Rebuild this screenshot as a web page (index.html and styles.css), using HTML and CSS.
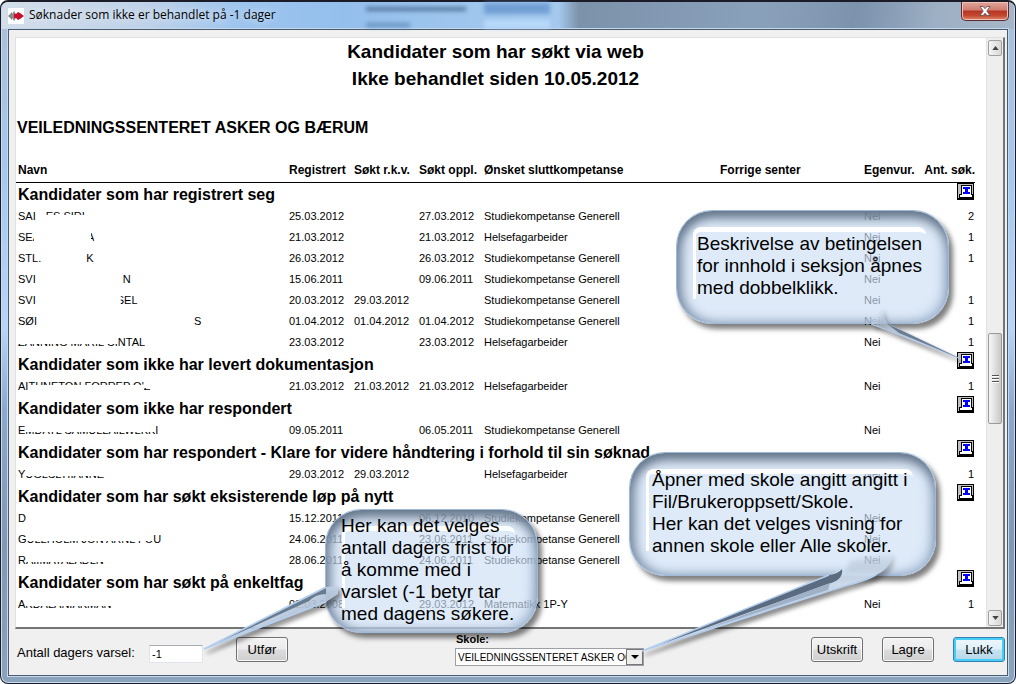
FILE: index.html
```html
<!DOCTYPE html>
<html lang="nb">
<head>
<meta charset="utf-8">
<title>Søknader som ikke er behandlet på -1 dager</title>
<link rel="stylesheet" href="styles.css">
</head>
<body>
<svg class="defs" aria-hidden="true">
  <symbol id="info" viewBox="0 0 17 17">
    <path d="M0 0h17v17H0z" fill="#000"/><path d="M1 1h15v14H1z" fill="#c0c0c0"/>
    <path d="M4 2h11v9h1v4H2v-4h2z" fill="#000"/><path d="M5 3h9v9h1v2H3v-2h2z" fill="#fff"/>
    <path d="M6 4h7v2h-2v3h2v2H6V9h2V6H6z" fill="#00f"/>
  </symbol>
  <linearGradient id="tail" x1="0" y1="0" x2="0.35" y2="1">
    <stop offset="0" stop-color="#d6e5f7" stop-opacity=".3"/><stop offset="0.6" stop-color="#b9cbe0"/><stop offset="1" stop-color="#d6e5f7"/>
  </linearGradient>
  <linearGradient id="wide-tail" x1="0" y1="0" x2="0" y2="1">
    <stop offset="0" stop-color="#d5e5f8" stop-opacity="0"/><stop offset="0.25" stop-color="#d5e5f8"/><stop offset="1" stop-color="#c3d4e9"/>
  </linearGradient>
</svg>
<div class="window">
  <header class="titlebar">
    <svg class="app-icon" viewBox="0 0 16 16" aria-hidden="true">
      <path d="M0 0h16v16H0z" fill="#fff"/>
      <path d="M0 8l4-4v2l2-3 2 3v4l-2 3-2-3v2z" fill="#8a8a8a"/>
      <path d="M6 6h2l2-2 2 1 4 3-4 3-2 1-2-2H6z" fill="#c8102e"/>
    </svg>
    <h1 class="caption">Søknader som ikke er behandlet på -1 dager</h1>
    <span class="behind" aria-hidden="true"></span>
    <button class="close" aria-label="Lukk vindu">
      <svg viewBox="0 0 12 10" aria-hidden="true"><path d="M1 .5h3l2 2.2L8 .5h3L7.8 5 11 9.500H8L6 7.300 4 9.500H1L4.200 5z" fill="#fff" stroke="#5b4650" stroke-width=".8"/></svg>
    </button>
  </header>
  <main class="client">
    <section class="viewer">
      <div class="report">
        <h2 class="report-title">Kandidater som har søkt via web<br>Ikke behandlet siden 10.05.2012</h2>
        <h3 class="school">VEILEDNINGSSENTERET ASKER OG BÆRUM</h3>
        <table class="list">
          <colgroup><col class="c-name"><col class="c-date"><col class="c-date"><col class="c-date"><col class="c-goal"><col><col class="c-own"><col class="c-count"></colgroup>
          <thead><tr><th>Navn</th><th>Registrert</th><th>Søkt r.k.v.</th><th>Søkt oppl.</th><th>Ønsket sluttkompetanse</th><th>Forrige senter</th><th>Egenvur.</th><th>Ant. søk.</th></tr></thead>
          <tbody>
            <tr class="group"><th colspan="7">Kandidater som har registrert seg</th><td><svg class="info"><use href="#info"/></svg></td></tr>
            <tr><td>SAI<i class="gap g12"></i><span class="upper">ES SIRI</span></td><td>25.03.2012</td><td></td><td>27.03.2012</td><td>Studiekompetanse Generell</td><td></td><td>Nei</td><td>2</td></tr>
            <tr><td><span class="left-part">SEA</span><i class="gap g51"></i><span class="right-part">A</span></td><td>21.03.2012</td><td></td><td>21.03.2012</td><td>Helsefagarbeider</td><td></td><td>Nei</td><td>1</td></tr>
            <tr><td>STL.<i class="gap g45"></i>K</td><td>26.03.2012</td><td></td><td>26.03.2012</td><td>Studiekompetanse Generell</td><td></td><td>Nei</td><td>1</td></tr>
            <tr><td>SVI<i class="gap g87"></i>N</td><td>15.06.2011</td><td></td><td>09.06.2011</td><td>Studiekompetanse Generell</td><td></td><td>Nei</td><td></td></tr>
            <tr><td>SVI<i class="gap g84"></i><span class="right-part">SEL</span></td><td>20.03.2012</td><td>29.03.2012</td><td></td><td>Studiekompetanse Generell</td><td></td><td>Nei</td><td>1</td></tr>
            <tr><td>SØI<i class="gap g156"></i>S</td><td>01.04.2012</td><td>01.04.2012</td><td>01.04.2012</td><td>Studiekompetanse Generell</td><td></td><td>Nei</td><td>1</td></tr>
            <tr><td><span class="lower">ZANNING MARIL CI</span>NTAL</td><td>23.03.2012</td><td></td><td>23.03.2012</td><td>Helsefagarbeider</td><td></td><td>Nei</td><td>1</td></tr>
            <tr class="group"><th colspan="7">Kandidater som ikke har levert dokumentasjon</th><td><svg class="info"><use href="#info"/></svg></td></tr>
            <tr><td>AI<span class="upper">THNETON FORREP O</span>'<span class="lower">Z</span></td><td>21.03.2012</td><td>21.03.2012</td><td>21.03.2012</td><td>Helsefagarbeider</td><td></td><td>Nei</td><td>1</td></tr>
            <tr class="group"><th colspan="7">Kandidater som ikke har respondert</th><td><svg class="info"><use href="#info"/></svg></td></tr>
            <tr><td>E<span class="lower">MDATL SAMULLAILWLKK</span>I</td><td>09.05.2011</td><td></td><td>06.05.2011</td><td>Studiekompetanse Generell</td><td></td><td>Nei</td><td></td></tr>
            <tr class="group"><th colspan="7">Kandidater som har respondert - Klare for videre håndtering i forhold til sin søknad</th><td><svg class="info"><use href="#info"/></svg></td></tr>
            <tr><td>Y<span class="lower">UGLSLTIIANNE</span></td><td>29.03.2012</td><td>29.03.2012</td><td></td><td>Helsefagarbeider</td><td></td><td>Nei</td><td>1</td></tr>
            <tr class="group"><th colspan="7">Kandidater som har søkt eksisterende løp på nytt</th><td><svg class="info"><use href="#info"/></svg></td></tr>
            <tr><td>D</td><td>15.12.2011</td><td></td><td>06.12.2010</td><td>Studiekompetanse Generell</td><td></td><td>Nei</td><td></td></tr>
            <tr><td>G<span class="lower">ULLHOLM JON ARNL FO</span>U</td><td>24.06.2011</td><td></td><td>23.06.2011</td><td>Studiekompetanse Generell</td><td></td><td>Nei</td><td></td></tr>
            <tr><td>R<span class="lower">AIIMATALADLN</span></td><td>28.06.2011</td><td></td><td>24.06.2011</td><td>Studiekompetanse Generell</td><td></td><td>Nei</td><td></td></tr>
            <tr class="group"><th colspan="7">Kandidater som har søkt på enkeltfag</th><td><svg class="info"><use href="#info"/></svg></td></tr>
            <tr><td>A<span class="lower">KDALANIAKMAN</span></td><td>02.03.2008</td><td></td><td>29.03.2012</td><td>Matematikk 1P-Y</td><td></td><td>Nei</td><td>1</td></tr>
          </tbody>
        </table>
      </div>
      <div class="scrollbar">
        <button class="step" aria-label="Rull opp"><svg viewBox="0 0 8 5"><path d="M0 5l4-5 4 5z" fill="#444"/></svg></button>
        <span class="track-above"></span>
        <span class="thumb"><i></i><i></i><i></i></span>
        <span class="track-below"></span>
        <button class="step" aria-label="Rull ned"><svg viewBox="0 0 8 5"><path d="M0 0l4 5 4-5z" fill="#444"/></svg></button>
      </div>
    </section>
    <footer class="actions">
      <label class="days-label" for="days">Antall dagers varsel:</label>
      <input class="days" id="days" type="text" value="-1">
      <button class="btn">Utfør</button>
      <div class="school-pick">
        <label for="skole">Skole:</label>
        <div class="combo">
          <select id="skole"><option>VEILEDNINGSSENTERET ASKER OG BÆRUM</option></select>
          <span class="drop" aria-hidden="true"><svg viewBox="0 0 8 4"><path d="M0 0h8L4 4z"/></svg></span>
        </div>
      </div>
      <div class="right">
        <button class="btn">Utskrift</button>
        <button class="btn">Lagre</button>
        <button class="btn default">Lukk</button>
      </div>
    </footer>
  </main>

  <aside class="callout describe">
    <p>Beskrivelse av betingelsen<br>for innhold i seksjon åpnes<br>med dobbelklikk.</p>
    <svg class="tail" viewBox="0 0 284 148" aria-hidden="true">
      <path d="M194 113C199 104 204 103 205 92Q206 110 213 114L284 148Z" fill="url(#tail)" fill-opacity=".85"/>
      <path d="M194 113L284 148L213 114" fill="none" stroke="#b4cbe8"/>
      <path d="M209 112L213 114L284 148L222 122Z" fill="#56687d" fill-opacity=".8"/>
    </svg>
  </aside>
  <aside class="callout open-school">
    <p>Åpner med skole angitt angitt i<br>Fil/Brukeroppsett/Skole.<br>Her kan det velges visning for<br>annen skole eller Alle skoler.</p>
    <svg class="tail" viewBox="0 0 306 200" aria-hidden="true">
      <path d="M199 122Q213 119 217 104L262 96Q264 114 246 122Q235 127 218 132L12 198Z" fill="url(#wide-tail)" fill-opacity=".88"/>
      <path d="M199 122Q208 121 212 116Q214 127 198 131L12 198Z" fill="#5b6c81"/>
      <path d="M200 130L70 178L198 137Z" fill="#9fb1c7"/>
      <path d="M199 122L12 198L218 132Q235 128 246 122" fill="none" stroke="#b4cfee" stroke-width="1.500"/>
    </svg>
  </aside>
  <aside class="callout deadline">
    <p>Her kan det velges<br>antall dagers frist for<br>å komme med i<br>varslet (-1 betyr tar<br>med dagens søkere.</p>
    <svg class="tail" viewBox="0 0 136 142" aria-hidden="true">
      <path d="M124 77L2 139L124 92L136 84V76Z" fill="#bfd0e5" fill-opacity=".88"/>
      <path d="M124 78L2 139L107 91Q114 84 124 84Z" fill="#53657a" fill-opacity=".8"/>
      <path d="M124 77L2 139L124 92" fill="none" stroke="#b4cfee" stroke-width="1.500"/>
    </svg>
  </aside>
</div>
</body>
</html>
```

FILE: styles.css
```css
* { box-sizing: border-box; }
body { margin: 0; background: #fff; color: #000; font-family: "Liberation Sans", Arial, sans-serif; font-size: 11px; }
h1, h2, h3, p { margin: 0; }
button, input, select { font-family: inherit; color: inherit; margin: 0; }
.defs { position: absolute; width: 0; height: 0; }

.window {
  position: relative;
  display: flex;
  flex-direction: column;
  min-height: 100vh;
  padding: 0 7px 7px;
  border: 1px solid #1b1c28;
  border-top-width: 2px;
  border-radius: 8px;
  background: linear-gradient(#a9bfd8, #a5c8ef 25%, #b4d6f8 48%, #8ba9cd 60%, #8098b4 80%, #8ca3bd);
  box-shadow: inset 0 0 0 1px #c9dcf0;
}
.titlebar {
  display: flex;
  align-items: center;
  gap: 5px;
  height: 27px;
  margin: 0 -6px;
  padding-left: 6px;
  border-radius: 6px 6px 0 0;
  background:
    linear-gradient(100deg, transparent 74%, #7c92ad 84%, transparent 92%),
    linear-gradient(90deg, #d3deea 0, #bfd2e8 14%, #9cc4ee 24%, #94bfec 34%, #a4c9ee 52%, #a4c9ee 55%, #7c92ab 57%, #8ba2bc 76%, #a6b6c8 100%);
}
.app-icon { width: 16px; height: 16px; }
.caption { font: 400 12px/18px "Open Sans", "Noto Sans", sans-serif; padding-bottom: 2px; text-shadow: 0 0 8px #fff; }
.behind {
  width: 200px;
  height: 26px;
  margin-left: 85px;
  background:
    linear-gradient(#53779f, #53779f) 0 4px / 100px 4px no-repeat,
    linear-gradient(#6790be, #6790be) 0 20px / 44px 4px no-repeat,
    linear-gradient(#719fd4, #719fd4) 118px 0 / 66px 11px no-repeat,
    linear-gradient(#b8d9fa, #b8d9fa) 118px 17px / 66px 8px no-repeat;
  filter: blur(2px);
}
.close {
  display: grid;
  place-items: center;
  align-self: flex-start;
  width: 48px;
  height: 19px;
  margin-left: auto;
  margin-right: 5px;
  padding: 0;
  border: 1px solid #5d2a2f;
  border-top: 0;
  border-radius: 0 0 5px 5px;
  background: linear-gradient(#e2a69c, #cf7d70 45%, #b73522 50%, #c3482f 75%, #dd8a6c);
  box-shadow: inset 0 0 0 1px #efc0b8;
}
.close svg { width: 12px; height: 10px; }

.client { display: flex; flex: 1; flex-direction: column; padding: 7px 2px 0 6px; border: 1px solid #4a5b6e; background: #f0f0f0; box-shadow: 0 0 0 1px #c4d8ee; }
.viewer { display: flex; flex: 1; border: 1px solid #e0e0e0; border-right: 2px solid #747474; border-bottom: 2px solid #747474; background: #fff; }
.report { flex: 1; min-width: 0; padding-right: 11px; }
.report-title { font-size: 19px; line-height: 27px; text-align: center; }
.school { margin: 22px 0 0 1px; font-size: 16px; line-height: 27px; }

.list { width: 100%; margin-top: 18px; border-collapse: collapse; table-layout: fixed; }
.c-name { width: 273px; }
.c-date { width: 65px; }
.c-goal { width: 236px; }
.c-own { width: 60px; }
.c-count { width: 51px; }
.list th, .list td { padding: 0; text-align: left; white-space: nowrap; vertical-align: middle; }
.list th:first-child, .list td:first-child { padding-left: 2px; }
.list thead th { height: 23px; font-size: 12px; border-bottom: 1px solid #000; }
.list td { height: 21px; padding-top: 2px; line-height: 13px; }
.list td:last-child, .list th:last-child { text-align: right; }
.list tbody td:last-child { padding-right: 1px; }
.list .group th { height: 23px; padding-top: 2px; font-size: 16px; line-height: 18px; text-align: left; }
.list .group td { height: 23px; padding: 0; vertical-align: top; }
.info { display: block; width: 17px; height: 17px; margin-left: auto; }
.gap { display: inline-block; }
.g12 { width: 10px; }
.g45 { width: 45px; }
.g51 { width: 47px; }
.g84 { width: 81px; }
.g87 { width: 87px; }
.g156 { width: 157px; }
.upper, .lower, .left-part, .right-part { display: inline-block; }
.upper { clip-path: inset(0 0 8px 0); }
.lower { clip-path: inset(8px 0 0 0); }
.left-part { clip-path: inset(0 6px 0 0); }
.right-part { clip-path: inset(0 0 0 4px); }

.scrollbar { display: flex; flex-direction: column; width: 17px; padding: 2px 1px 1px; background: #eee; border-left: 1px solid #e2e2e2; }
.step { display: grid; place-items: center; height: 16px; padding: 0; border: 1px solid #a0a0a0; border-radius: 2px; background: linear-gradient(90deg, #f4f4f4, #d8d8d8); }
.step svg { width: 7px; height: 4px; }
.track-above { flex: 279; }
.track-below { flex: 187; }
.thumb { display: flex; flex-direction: column; justify-content: center; align-items: center; gap: 1px; height: 91px; border: 1px solid #9a9a9a; border-radius: 2px; background: linear-gradient(90deg, #f6f6f6, #e2e2e2 45%, #c8c8c8); }
.thumb i { width: 7px; height: 2px; border-top: 1px solid #555; background: #fff; }

.actions { display: flex; align-items: flex-start; height: 46px; padding: 8px 0 0 2px; }
.days-label { width: 132px; padding-top: 8px; font-size: 13px; line-height: 16px; white-space: nowrap; }
.days { width: 54px; height: 18px; margin: 8px 33px 0 0; padding: 0 2px; border: 1px solid #e0e4ea; border-top-color: #a8adb5; background: #fff; font-size: 11px; }
.btn { width: 52px; height: 25px; padding: 0; border: 1px solid #707070; border-radius: 3px; background: linear-gradient(#f3f3f3, #ebebeb 48%, #dcdcdc 52%, #cfcfcf); box-shadow: inset 0 0 0 1px #fafafa; font-size: 13px; }
.btn.default { border-color: #3280b4; background: linear-gradient(#eef7fc, #dff0f9 48%, #c6e2f0 52%, #b5d7e8); box-shadow: inset 0 0 0 2px #48cdf5; }
.school-pick { width: 189px; margin: -6px 0 0 167px; font-weight: 700; line-height: 17px; }
.school-pick label { display: block; padding-left: 1px; }
.combo { display: flex; height: 18px; border: 1px solid #9aa0a6; background: #fff; }
.combo select { flex: 1; min-width: 0; padding: 0 0 0 2px; border: 0; background: #fff; appearance: none; font-size: 10px; }
.drop { display: grid; place-items: center; width: 17px; border: 1px solid #777; background: #eee; }
.drop svg { width: 8px; height: 4px; }
.right { display: flex; gap: 19px; margin-left: auto; }

.callout {
  position: absolute;
  border: 1px solid #9fb9d8;
  border-radius: 36px;
  background: rgba(205, 223, 245, .66);
  box-shadow: inset 0 10px 12px -3px #627388, inset 8px 0 12px -3px #8094ad, inset -6px -3px 12px -2px #a5bbd5, 4px 5px 5px rgba(0, 0, 0, .5);
  font-size: 19px;
  line-height: 22px;
  white-space: nowrap;
}
.callout p { position: relative; z-index: 1; }
.callout::before { content: ""; position: absolute; inset: 16px 22px 24px 16px; border-top: 5px solid #fff; border-left: 3px solid #fff; border-radius: 8px 8px 0 0; }
.tail { position: absolute; overflow: visible; filter: drop-shadow(3px 4px 2px rgba(0, 0, 0, .45)); }
.describe { left: 675px; top: 208px; width: 273px; height: 114px; padding: 22px 0 0 20px; }
.describe .tail { left: 0; top: 0; width: 284px; height: 148px; }
.open-school { left: 628px; top: 450px; width: 307px; height: 124px; padding: 16px 0 0 22px; }
.open-school .tail { left: 0; top: 0; width: 306px; height: 200px; }
.deadline { left: 324px; top: 507px; width: 213px; height: 124px; padding: 5px 0 0 15px; }
.deadline .tail { left: -124px; top: 0; width: 136px; height: 142px; }
```
